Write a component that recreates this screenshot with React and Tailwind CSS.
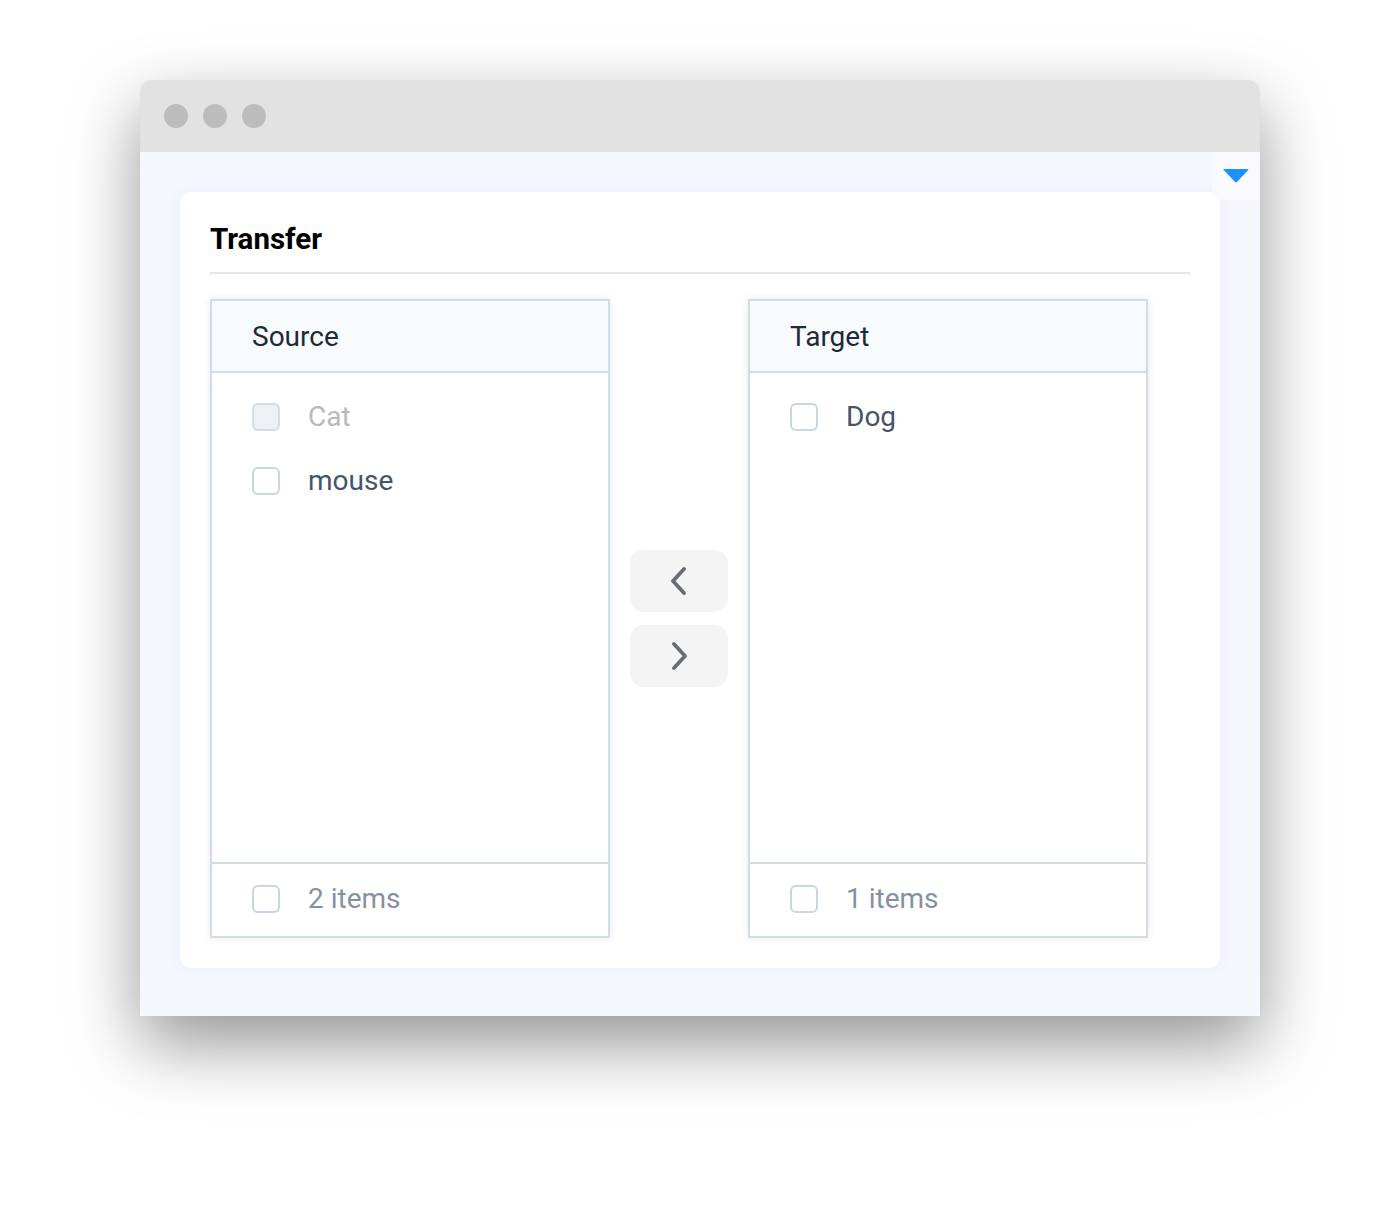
import React from "react";

const font = { fontFamily: "Roboto, 'Noto Sans', sans-serif" };

function Checkbox({ disabled }) {
  return (
    <span
      className={
        "block w-[28px] h-[28px] rounded-[6px] border-2 shrink-0 " +
        (disabled ? "border-[#d3dce7] bg-[#edf1f6]" : "border-[#c9d5e3] bg-white")
      }
    />
  );
}

function List({ title, items, count }) {
  return (
    <div className="w-[400px] h-[639px] border-2 border-[#d1dce8] bg-white flex flex-col shadow-[0_0_8px_rgba(0,0,0,0.09)]">
      <div className="h-[72px] shrink-0 bg-[#f8fbfe] border-b-2 border-[#d1dce8] flex items-center pl-[40px] pt-[2px] text-[28px] text-[#1f2937]">
        {title}
      </div>
      <div className="flex-1 pt-[12px]">
        {items.map((it) => (
          <div key={it.label} className="h-[64px] flex items-center pl-[40px] gap-[28px]">
            <Checkbox disabled={it.disabled} />
            <span className={"text-[28px] " + (it.disabled ? "text-[#b9b9b9]" : "text-[#46546a]")}>
              {it.label}
            </span>
          </div>
        ))}
      </div>
      <div className="h-[74px] shrink-0 border-t-2 border-[#d1dce8] flex items-center pl-[40px] gap-[28px] pb-[2px]">
        <Checkbox />
        <span className="text-[28px] text-[#8491a5]">{count}</span>
      </div>
    </div>
  );
}

function Chevron({ dir }) {
  return (
    <svg width="16" height="30" viewBox="0 0 16 30" fill="none">
      <polyline
        points={dir === "left" ? "13,3 2,15 13,27" : "3,3 14,15 3,27"}
        stroke="#676d74"
        strokeWidth="3.8"
        strokeLinecap="round"
        strokeLinejoin="round"
      />
    </svg>
  );
}

export default function App() {
  return (
    <div className="w-[1400px] h-[1216px] bg-white pt-[80px] pl-[140px]" style={font}>
      <div className="w-[1120px] h-[936px] rounded-t-[12px] overflow-hidden flex flex-col shadow-[0_28px_70px_rgba(0,0,0,0.42)]">
        <div className="h-[72px] shrink-0 bg-[#e2e2e2] flex items-center pl-[24px] gap-[15px]">
          <span className="w-[24px] h-[24px] rounded-full bg-[#bcbcbc]" />
          <span className="w-[24px] h-[24px] rounded-full bg-[#bcbcbc]" />
          <span className="w-[24px] h-[24px] rounded-full bg-[#bcbcbc]" />
        </div>
        <div className="flex-1 bg-[#f4f7fe] relative pt-[40px] pl-[40px]">
          <div className="absolute right-0 top-0 w-[48px] h-[48px] bg-[#f8faff] rounded-bl-[10px] flex items-center justify-center">
            <svg width="28" height="16" viewBox="0 0 28 16">
              <path d="M1 2.5 Q1 1 2.5 1 L25.5 1 Q27 1 26 2.2 L15.2 13.8 Q14 15 12.8 13.8 L2 2.2 Q1 1.5 1 2.5 Z" fill="#1e90ff" />
            </svg>
          </div>
          <div className="w-[1040px] bg-white rounded-[10px] p-[30px] shadow-[0_0_14px_rgba(60,80,140,0.06)]">
            <div className="h-[52px] pt-[1px] border-b-2 border-[#e3e6ea] text-[29.5px] leading-[32px] font-bold text-black">
              Transfer
            </div>
            <div className="mt-[25px] flex items-center">
              <List
                title="Source"
                items={[
                  { label: "Cat", disabled: true },
                  { label: "mouse" },
                ]}
                count="2 items"
              />
              <div className="w-[138px] flex flex-col items-center gap-[13px]">
                <button className="w-[98px] h-[62px] rounded-[14px] bg-[#f4f4f4] flex items-center justify-center">
                  <Chevron dir="left" />
                </button>
                <button className="w-[98px] h-[62px] rounded-[14px] bg-[#f4f4f4] flex items-center justify-center">
                  <Chevron dir="right" />
                </button>
              </div>
              <List title="Target" items={[{ label: "Dog" }]} count="1 items" />
            </div>
          </div>
        </div>
      </div>
    </div>
  );
}
